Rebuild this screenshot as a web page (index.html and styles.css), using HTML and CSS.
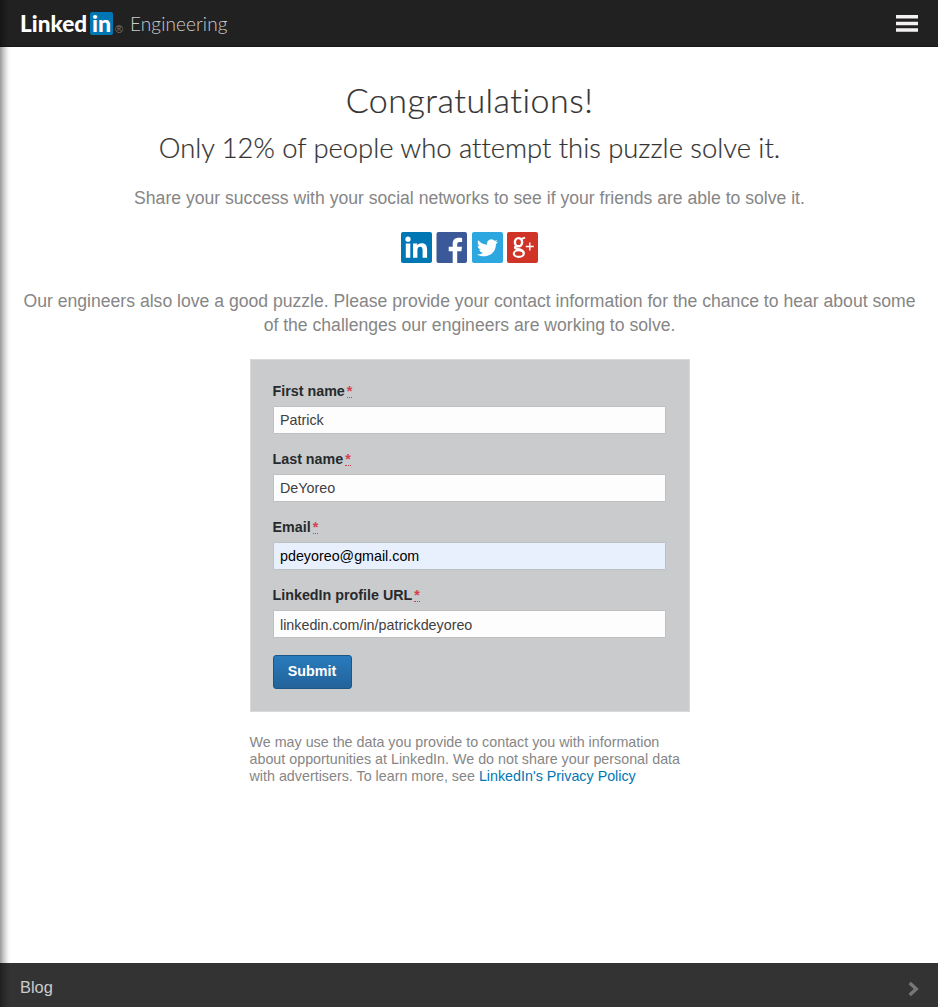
FILE: index.html
```html
<!DOCTYPE html>
<html lang="en">
<head>
<meta charset="utf-8">
<title>LinkedIn Engineering</title>
<link rel="stylesheet" href="styles.css">
</head>
<body>
<div class="page">
  <header class="topbar">
    <div class="brand">
      <span class="wordmark">Linked</span>
      <span class="in-badge">in</span>
      <span class="reg">®</span>
      <span class="section">Engineering</span>
    </div>
    <svg class="menu" viewBox="0 0 22 17"><path d="M0 0h22v3.600H0zM0 6.700h22v3.600H0zM0 13.200h22v3.600H0z" fill="#f4f1f3"/></svg>
  </header>
  <main class="content">
    <h1>Congratulations!</h1>
    <h2>Only 12% of people who attempt this puzzle solve it.</h2>
    <p class="share">Share your success with your social networks to see if your friends are able to solve it.</p>
    <div class="social">
      <svg viewBox="0 0 31 31"><rect width="31" height="31" rx="2" fill="#0077b5"/><g fill="#fff"><circle cx="7" cy="7.2" r="2.6"/><path d="M4.8 11.5h4.5v14.2H4.8zM12 11.5h4.3v2c.8-1.400 2.300-2.300 4.300-2.300 4.300 0 5.500 2.700 5.500 6.600v7.900h-4.500v-7c0-2.200-.3-3.900-2.400-3.900-2.200 0-2.800 1.500-2.800 3.800v7.100H12z"/></g></svg>
      <svg viewBox="0 0 31 31"><rect x=".5" width="30.500" height="31" rx="2" fill="#3b5998"/><path fill="#fff" d="M16.700 31V19.200h-4V14.700h4v-3c0-4 2.400-6 6.100-6 1.700 0 2.800.1 3.300.2v4.200h-2.400c-2 0-2.500 1-2.500 2.400v2.200h4.800l-.6 4.500h-4.200V31z"/></svg>
      <svg viewBox="0 0 31 31"><rect width="31" height="31" rx="2" fill="#2ca7df"/><path fill="#fff" d="M26 9.400c-.8.350-1.600.6-2.500.7.900-.55 1.600-1.400 1.900-2.400-.8.500-1.800.85-2.800 1.050a4.300 4.300 0 0 0-7.400 3.900c-3.600-.2-6.800-1.900-8.900-4.500-1.100 1.900-.6 4.500 1.350 5.800-.7 0-1.400-.2-2-.55 0 2.100 1.450 3.900 3.500 4.350-.6.150-1.300.2-1.950.1.550 1.700 2.150 3 4.050 3A8.700 8.700 0 0 1 5 22.500c6.800 4.300 18.900 1 18.900-10.300.8-.6 1.550-1.700 2.100-2.800z"/></svg>
      <svg viewBox="0 0 31 31"><rect width="31" height="31" rx="2" fill="#d03427"/><g fill="none" stroke="#fff"><ellipse cx="11.500" cy="10.200" rx="3.600" ry="4.100" stroke-width="2.400"/><ellipse cx="11.800" cy="21.600" rx="5" ry="3.300" stroke-width="2.100"/><path d="M13.500 6.600C15 7 16.500 6.500 18 5.500" stroke-width="1.800"/><path d="M9.800 13.800c-2.800 1.500-2.200 2.700.5 3.200 3.800.7 6 1.500 6.500 4" stroke-width="2.300"/><path d="M18.800 14.500h8M22.800 10.500v8" stroke-width="1.400"/></g></svg>
    </div>
    <p class="intro">Our engineers also love a good puzzle. Please provide your contact information for the chance to hear about some of the challenges our engineers are working to solve.</p>
    <form class="card">
      <label for="first">First name<abbr>*</abbr></label>
      <input id="first" type="text" value="Patrick">
      <label for="last">Last name<abbr>*</abbr></label>
      <input id="last" type="text" value="DeYoreo">
      <label for="email">Email<abbr>*</abbr></label>
      <input id="email" class="autofilled" type="text" value="pdeyoreo@gmail.com">
      <label for="url">LinkedIn profile URL<abbr>*</abbr></label>
      <input id="url" class="url" type="text" value="linkedin.com/in/patrickdeyoreo">
      <button type="button">Submit</button>
    </form>
    <p class="legal">We may use the data you provide to contact you with information about opportunities at LinkedIn. We do not share your personal data with advertisers. To learn more, see <a href="#">LinkedIn's Privacy Policy</a></p>
  </main>
  <footer class="bottombar">
    <span>Blog</span>
    <svg viewBox="0 0 12 14"><path d="M2.500 1.500 8.500 7l-6 5.500" fill="none" stroke="#777" stroke-width="3.200"/></svg>
  </footer>
</div>
</body>
</html>
```
FILE: styles.css
```css
* { box-sizing: border-box; }
body {
  margin: 0;
  background: #fff;
  font-family: "Liberation Sans", Arial, sans-serif;
  color: #333;
}
.page {
  position: relative;
  display: flex;
  flex-direction: column;
  height: 1007px;
  overflow: hidden;
}
/* Shadow cast by the off-canvas menu */
.page::after {
  content: "";
  position: absolute;
  inset: 0 auto 0 0;
  width: 11px;
  background: linear-gradient(to right, rgba(0,0,0,.4), rgba(0,0,0,.2) 35%, rgba(0,0,0,.04) 75%, transparent);
  pointer-events: none;
}
.topbar {
  display: flex;
  justify-content: space-between;
  align-items: flex-start;
  height: 47px;
  padding: 0 20px;
  background: #212121;
  border-bottom: 1px solid #181818;
}
.brand { display: flex; align-items: flex-start; height: 46px; }
.wordmark {
  width: 70px;
  padding-top: 11px;
  font: 900 22.500px/26px Lato, sans-serif;
  letter-spacing: .05px;
  color: #fff;
}
.in-badge {
  width: 23px;
  height: 23px;
  margin-top: 12px;
  border-radius: 2px;
  background: #0077b5;
  color: #fff;
  font: 900 23px/22px Lato, sans-serif;
  text-align: center;
}
.reg {
  width: 17px;
  padding: 23px 0 0 2px;
  font-size: 11px;
  line-height: 12px;
  color: #777;
}
.section {
  padding-top: 11px;
  font: 300 19px/26px Lato, sans-serif;
  letter-spacing: .1px;
  color: #ccc;
}
.menu {
  width: 22px;
  height: 17px;
  margin-top: 15px;
}
.content {
  flex: 1;
  padding: 33px 19px 0 20px;
  text-align: center;
}
h1, h2 {
  margin: 0;
  font-family: Lato, sans-serif;
  font-weight: 300;
  font-variant-ligatures: none;
  white-space: nowrap;
  -webkit-text-stroke: .2px #333;
}
h1 { font-size: 34px; line-height: 40px; letter-spacing: .5px; }
h2 { margin-top: 8px; font-size: 27.400px; line-height: 40px; letter-spacing: -.02px; }
.share, .intro {
  margin: 0;
  font-size: 17.600px;
  line-height: 24px;
  color: #868686;
}
.share { margin-top: 18px; }
.social {
  display: flex;
  justify-content: center;
  gap: 4.500px;
  height: 31px;
  margin-top: 22px;
}
.social svg { width: 31px; height: 31px; }
.intro { margin-top: 26px; }
.card {
  display: flex;
  flex-direction: column;
  width: 440px;
  height: 353px;
  margin: 22px auto 0;
  padding: 22px 23px 0 22px;
  border: 1px solid #d8d9da;
  background: #cacbcc;
  text-align: left;
}
.card label {
  height: 24px;
  font-size: 14.300px;
  font-weight: 700;
  line-height: 18px;
  color: #262a2c;
}
.card abbr {
  display: inline-block;
  height: 16px;
  vertical-align: top;
  margin-left: 2px;
  border-bottom: 1px dotted #c8414a;
  color: #d8404c;
  text-decoration: none;
}
.card input {
  flex: none;
  height: 28px;
  margin: 0 0 16px;
  padding: 0 6.500px;
  border: 1px solid #bfc0c2;
  border-radius: 1px;
  background: #fdfdfd;
  color: #404040;
  font: 14.300px "Liberation Sans", Arial, sans-serif;
}
.card input.autofilled { background: #e8f0fe; color: #000; }
.card input.url { padding-top: 2px; }
.card button {
  width: 79px;
  height: 34px;
  margin-top: 1px;
  padding: 0 0 2px;
  border: 1px solid #1b5788;
  border-radius: 3px;
  background: linear-gradient(#287bbc, #23639a);
  color: #fff;
  font: 700 14.300px "Liberation Sans", Arial, sans-serif;
}
.legal {
  width: 440px;
  margin: 22px auto 0;
  font-size: 14.300px;
  line-height: 17px;
  text-align: left;
  color: #868686;
}
.legal a { color: #0077b5; text-decoration: none; }
.bottombar {
  display: flex;
  align-items: center;
  justify-content: space-between;
  height: 44px;
  padding: 5px 18px 0 20px;
  background: #333;
  color: #ccc;
  font-size: 16.400px;
}
.bottombar svg { width: 13px; height: 16px; margin-top: 2px; }
```
